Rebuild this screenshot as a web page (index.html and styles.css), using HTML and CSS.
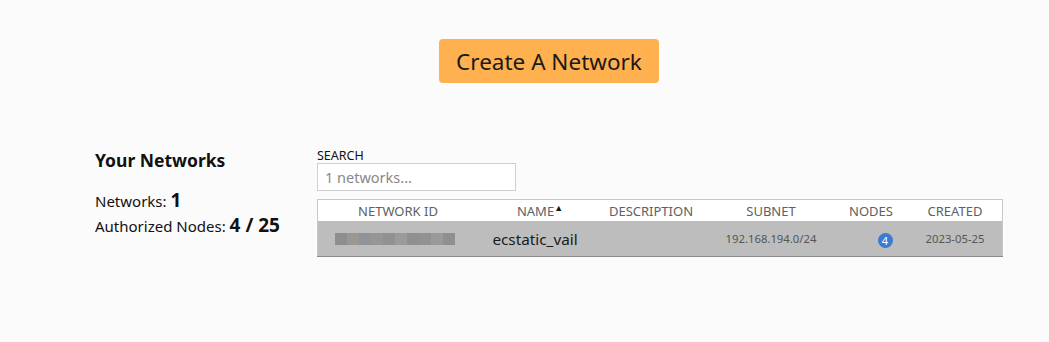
FILE: index.html
```html
<!DOCTYPE html>
<html lang="en">
<head>
    <meta charset="UTF-8">
    <title>Networks</title>
    <link rel="stylesheet" href="styles.css">
</head>
<body>
    <div class="top">
        <button class="create-btn">Create A Network</button>
    </div>

    <div class="main">
        <div class="summary">
            <h3>Your Networks</h3>
            <div class="stat">Networks: <b>1</b></div>
            <div class="stat">Authorized Nodes: <b>4 / 25</b></div>
        </div>

        <div class="list">
            <label class="search-label">SEARCH</label>
            <input type="text" class="search" placeholder="1 networks...">

            <table class="networks">
                <thead>
                    <tr>
                        <th class="c-id">NETWORK ID</th>
                        <th class="c-name">NAME<span class="sort">&#9650;</span></th>
                        <th class="c-desc">DESCRIPTION</th>
                        <th class="c-subnet">SUBNET</th>
                        <th class="c-nodes">NODES</th>
                        <th class="c-created">CREATED</th>
                    </tr>
                </thead>
                <tbody>
                    <tr>
                        <td class="c-id">
                            <div class="hidden-id">
                                <span style="background:#8e8e8e"></span>
                                <span style="background:#9a9896"></span>
                                <span style="background:#8f939a"></span>
                                <span style="background:#989694"></span>
                                <span style="background:#929190"></span>
                                <span style="background:#9b9b99"></span>
                                <span style="background:#8e9095"></span>
                                <span style="background:#939290"></span>
                                <span style="background:#9c9a99"></span>
                                <span style="background:#8f8f91"></span>
                            </div>
                        </td>
                        <td class="c-name name">ecstatic_vail</td>
                        <td class="c-desc"></td>
                        <td class="c-subnet small">192.168.194.0/24</td>
                        <td class="c-nodes"><span class="badge">4</span></td>
                        <td class="c-created small">2023-05-25</td>
                    </tr>
                </tbody>
            </table>
        </div>
    </div>
</body>
</html>
```

FILE: styles.css
```css
body {
    font-family: 'Noto Sans', 'Open Sans', sans-serif;
    margin: 0;
    padding: 0;
    background-color: #fbfbfb;
    color: #111;
}
.top {
    display: flex;
    justify-content: center;
    padding-top: 39px;
    padding-left: 49px;
}
.create-btn {
    font-family: inherit;
    width: 220px;
    height: 44px;
    background-color: #ffb04f;
    border: none;
    border-radius: 4px;
    font-size: 22.5px;
    color: #1a1a1a;
    padding: 0;
}
.main {
    display: flex;
    padding-top: 66px;
    padding-left: 95px;
}
.summary {
    width: 222px;
}
.summary h3 {
    margin: -1px 0 16px 0;
    font-size: 17.5px;
    font-weight: bold;
}
.stat {
    font-size: 15px;
    line-height: 24px;
}
.stat b {
    font-size: 19px;
}
.list {
    display: flex;
    flex-direction: column;
    align-items: flex-start;
}
.search-label {
    font-size: 12.5px;
    line-height: 14px;
    color: #111;
}
.search {
    font-family: inherit;
    box-sizing: border-box;
    width: 199px;
    height: 28px;
    border: 1px solid #cfcfcf;
    padding: 0 7px;
    font-size: 14.5px;
    outline: none;
    background: #fff;
}
.search::placeholder {
    color: #888;
}
.networks {
    margin-top: 8px;
    width: 686px;
    table-layout: fixed;
    border-collapse: collapse;
    border: 1px solid #c8c8c8;
    border-bottom: 1px solid #8a8a8a;
}
.networks th {
    background: #fff;
    font-weight: normal;
    font-size: 13px;
    color: #606060;
    height: 21px;
    padding: 0;
    text-align: center;
}
.networks td {
    background: #bdbdbd;
    height: 35px;
    padding: 0;
    text-align: center;
}
.c-id { width: 160px; }
.c-name { width: 124px; }
.networks td.name { padding-right: 10px; }
.c-desc { width: 98px; }
.c-subnet { width: 142px; }
.c-nodes { width: 58px; }
.networks .c-created { width: 94px; padding-left: 8px; }
.sort {
    font-size: 9px;
    vertical-align: 5px;
    color: #111;
}
.name {
    font-size: 15.3px;
    color: #1a1a1a;
}
.small {
    font-size: 11.3px;
    color: #555;
}
.hidden-id {
    display: flex;
    margin-left: 17px;
    width: 120px;
    height: 12px;
}
.hidden-id span {
    flex: 1;
}
.badge {
    display: inline-block;
    width: 15px;
    height: 15px;
    line-height: 15px;
    border-radius: 50%;
    background: #3a7bd5;
    color: #fff;
    font-size: 11px;
    margin-left: 28px;
}
```
